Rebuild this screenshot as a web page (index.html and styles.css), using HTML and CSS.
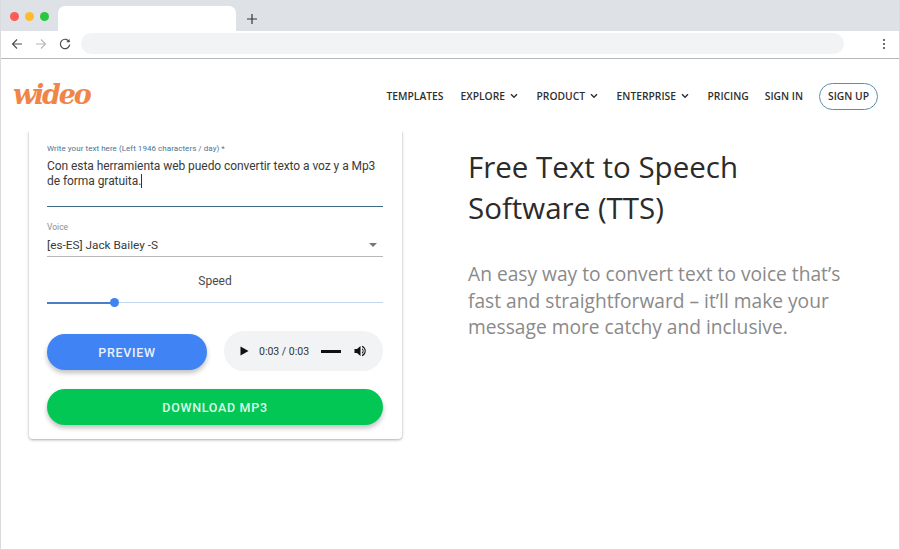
FILE: index.html
```html
<!DOCTYPE html>
<html lang="en">
<head>
<meta charset="utf-8">
<title>Wideo Text to Speech</title>
<link rel="stylesheet" href="styles.css">
</head>
<body>
<div class="window">
  <div class="tabbar">
    <div class="dots"><i class="dot red"></i><i class="dot yellow"></i><i class="dot green"></i></div>
    <div class="tab"></div>
    <svg class="plus" width="10" height="10" viewBox="0 0 10 10"><path d="M5 0v10M0 5h10" stroke="#33363a" stroke-width="1.2"/></svg>
  </div>
  <div class="toolbar">
    <svg class="tool" width="12" height="12" viewBox="0 0 12 12" fill="none" stroke="#4a4d50" stroke-width="1.1"><path d="M11 6H1.5M6 1.5 1.5 6 6 10.5"/></svg>
    <svg class="tool" width="12" height="12" viewBox="0 0 12 12" fill="none" stroke="#b4b6b8" stroke-width="1.1"><path d="M1 6h9.5M6 1.5 10.5 6 6 10.5"/></svg>
    <svg class="tool" width="12" height="12" viewBox="0 0 12 12" fill="none" stroke="#4a4d50" stroke-width="1.2"><path d="M10.3 4A4.7 4.7 0 1 0 10.7 6.6"/><path d="M10.6 1v3.3H7.3" fill="#4a4d50" stroke="none"/></svg>
    <div class="address"></div>
    <svg class="menu" width="4" height="12" viewBox="0 0 4 12" fill="#4a4d50"><circle cx="2" cy="2" r="1.1"/><circle cx="2" cy="6" r="1.1"/><circle cx="2" cy="10" r="1.1"/></svg>
  </div>
  <header class="nav">
    <div class="logo">wideo</div>
    <nav class="links">
      <a>TEMPLATES</a>
      <a>EXPLORE<svg class="chev" width="8" height="6" viewBox="0 0 8 6" fill="none" stroke="#333" stroke-width="1.5"><path d="M1 1.2 4 4.2 7 1.2"/></svg></a>
      <a>PRODUCT<svg class="chev" width="8" height="6" viewBox="0 0 8 6" fill="none" stroke="#333" stroke-width="1.5"><path d="M1 1.2 4 4.2 7 1.2"/></svg></a>
      <a>ENTERPRISE<svg class="chev" width="8" height="6" viewBox="0 0 8 6" fill="none" stroke="#333" stroke-width="1.5"><path d="M1 1.2 4 4.2 7 1.2"/></svg></a>
      <a>PRICING</a>
      <a>SIGN IN</a>
      <a class="signup">SIGN UP</a>
    </nav>
  </header>
  <main class="content">
    <section class="card">
      <div class="label">Write your text here (Left 1946 characters / day) *</div>
      <div class="textarea">Con esta herramienta web puedo convertir texto a voz y a Mp3 de forma gratuita.<span class="caret"></span></div>
      <div class="voice-label">Voice</div>
      <div class="select"><span>[es-ES] Jack Bailey -S</span><i class="arrow"></i></div>
      <div class="speed">Speed</div>
      <div class="slider"><div class="fill"></div><div class="thumb"></div></div>
      <div class="actions">
        <div class="btn preview">PREVIEW</div>
        <div class="audio">
          <svg width="9" height="10" viewBox="0 0 9 10"><path d="M0.5 0.5 8.5 5 0.5 9.5Z" fill="#111"/></svg>
          <span class="time">0:03 / 0:03</span>
          <i class="track"></i>
          <svg width="12" height="12" viewBox="0 0 12 12" fill="#111"><path d="M0.5 4H3L6.5 1V11L3 8H0.5Z"/><path d="M8 3.2a3.2 3.2 0 0 1 0 5.6V7.4a1.7 1.7 0 0 0 0-2.8Z"/><path d="M8 .8a5.5 5.5 0 0 1 0 10.4v-1.2a4.3 4.3 0 0 0 0-8Z"/></svg>
        </div>
      </div>
      <div class="btn download">DOWNLOAD MP3</div>
    </section>
    <section class="intro">
      <h1>Free Text to Speech Software (TTS)</h1>
      <p>An easy way to convert text to voice that’s fast and straightforward – it’ll make your message more catchy and inclusive.</p>
    </section>
  </main>
</div>
</body>
</html>
```
FILE: styles.css
```css
* { box-sizing: border-box; }
html, body { margin: 0; height: 100%; background: #fff; }
body { overflow: hidden; }
.window { width: 900px; height: 550px; border: 1px solid #d9dbde; border-top: 0; display: flex; flex-direction: column; overflow: hidden; }
.tabbar { height: 31px; margin: 0 -1px; background: #dee1e6; display: flex; align-items: flex-end; padding-left: 10px; flex: none; }
.dots { display: flex; gap: 6px; align-self: flex-start; margin-top: 12px; }
.dot { width: 9px; height: 9px; border-radius: 50%; display: block; }
.red { background: #fc5b57; }
.yellow { background: #fdbc2e; }
.green { background: #29c73f; }
.tab { width: 178px; height: 25px; background: #fff; border-radius: 7px 7px 0 0; margin-left: 9px; }
.plus { margin-left: 11px; align-self: flex-start; margin-top: 14px; }
.toolbar { height: 28px; margin: 0 -1px; border-bottom: 1px solid #b4b6b8; display: flex; align-items: center; padding: 0 0 2px 11px; flex: none; }
.tool { margin-right: 12px; flex: none; }
.tool + .tool + .tool { margin-right: 10px; }
.address { width: 763px; height: 21px; background: #f1f3f4; border-radius: 11px; }
.menu { margin-left: 38px; }
.nav { height: 72px; display: flex; justify-content: space-between; align-items: center; padding: 0 21px 0 12px; flex: none; }
.logo { font: italic 700 27px/1 "DejaVu Serif", serif; color: #f08548; letter-spacing: -2.2px; margin-top: -2px; }
.links { display: flex; align-items: center; gap: 16px; font: 600 10.3px/1 "Open Sans", sans-serif; color: #2f2f2f; margin-top: 2px; }
.links a { display: flex; align-items: center; white-space: nowrap; }
.links a:first-child { margin-right: 1px; }
.chev { margin-left: 5px; margin-right: 2.5px; }
.links .signup { border: 1px solid #5e8ea3; border-radius: 14px; height: 27px; padding: 0 8px; }
.content { flex: 1; display: flex; align-items: flex-start; }
.card { width: 373px; height: 308px; margin-left: 28px; padding: 13px 19px 0 18px; background: #fff; border-radius: 0 0 4px 4px; box-shadow: 0 1px 3px rgba(0,0,0,.32), 0 0 2px rgba(0,0,0,.06); font-family: Roboto, sans-serif; clip-path: inset(0 -8px -8px -8px); }
.label { font-size: 8px; line-height: 10px; color: #4c7393; letter-spacing: .05px; }
.textarea { height: 48px; margin-top: 5px; font-size: 12px; line-height: 14.5px; letter-spacing: -.06px; color: #3a3a3a; border-bottom: 1.5px solid #3f6a88; }
.caret { display: inline-block; width: 1px; height: 14px; background: #333; vertical-align: -3px; }
.voice-label { font-size: 8.5px; line-height: 10px; margin-top: 15px; color: #8d8d8d; }
.select { height: 21px; margin-top: 4px; display: flex; justify-content: space-between; align-items: center; font-size: 11.8px; color: #3a3a3a; border-bottom: 1px solid #b8b8b8; padding: 0 6px 2px 0; }
.arrow { width: 0; height: 0; border: 4px solid transparent; border-top-color: #777; border-bottom: 0; }
.speed { margin-top: 17px; text-align: center; font-size: 12px; line-height: 15px; color: #4a4a4a; }
.slider { position: relative; height: 9px; margin-top: 9px; background: linear-gradient(#c3d7ec, #c3d7ec) center / 100% 1px no-repeat; }
.fill { position: absolute; left: 0; top: 3.5px; height: 2px; width: 67px; background: #4a7fc4; }
.thumb { position: absolute; left: 63px; top: 0; width: 9px; height: 9px; border-radius: 50%; background: #3f83f0; }
.actions { display: flex; align-items: center; justify-content: space-between; margin-top: 24px; }
.btn { display: flex; align-items: center; justify-content: center; border-radius: 18px; color: #fff; font-size: 12.5px; font-weight: 500; letter-spacing: .7px; height: 36px; box-shadow: 0 3px 5px rgba(0,0,0,.25); }
.preview { width: 160px; background: #3f83f4; color: #e9f1ff; }
.audio { width: 159px; height: 40px; margin-bottom: 2px; border-radius: 20px; background: #f1f3f4; display: flex; align-items: center; padding: 0 13px 0 16px; color: #333; font-size: 10.5px; }
.time { margin-left: 10px; white-space: nowrap; }
.track { width: 20px; height: 3px; background: #111; margin: 0 13px 0 12px; flex: none; }
.download { margin-top: 16px; background: #03c755; color: #dff8e9; }
.intro { width: 390px; margin-left: 66px; padding-top: 15px; font-family: "Open Sans", sans-serif; }
h1 { margin: 0; font-size: 29.5px; line-height: 41px; font-weight: 400; color: #2b2b2b; }
p { margin: 33px 0 0; font-size: 19.2px; line-height: 26.7px; color: #8a8a8a; }
```
